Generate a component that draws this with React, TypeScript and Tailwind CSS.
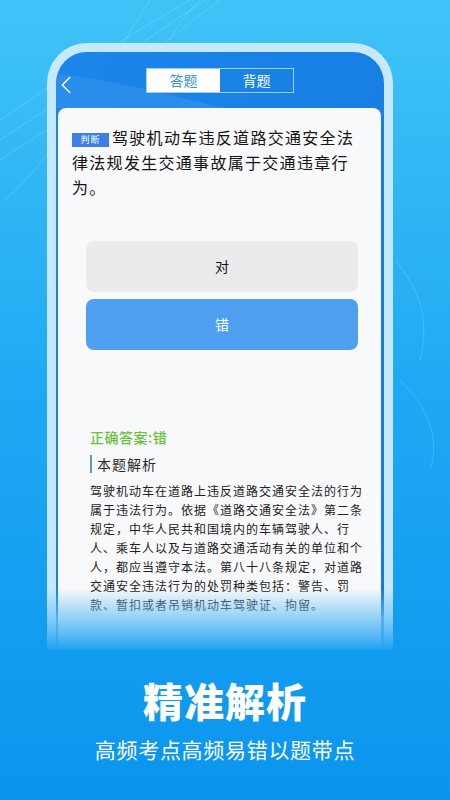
import { ChevronLeft } from 'lucide-react';

const cjk = { fontFamily: '"Noto Sans CJK SC", "Noto Sans", sans-serif' };

const analysis = [
  '驾驶机动车在道路上违反道路交通安全法的行为',
  '属于违法行为。依据《道路交通安全法》第二条',
  '规定，中华人民共和国境内的车辆驾驶人、行',
  '人、乘车人以及与道路交通活动有关的单位和个',
  '人，都应当遵守本法。第八十八条规定，对道路',
  '交通安全违法行为的处罚种类包括：警告、罚',
  '款、暂扣或者吊销机动车驾驶证、拘留。',
];

function Swirls() {
  // faint background waves
  return (
    <svg className="pointer-events-none absolute inset-0" width="450" height="800" viewBox="0 0 450 800" fill="none">
      <g stroke="#ffffff" strokeOpacity="0.16" strokeWidth="1">
        <path d="M0 120 C60 80 120 40 190 0" />
        <path d="M0 140 C70 95 130 50 205 0" />
        <path d="M0 160 C80 110 140 60 220 0" />
        <path d="M5 200 C60 150 100 80 150 0" />
        <path d="M170 40 C180 20 190 10 200 0" />
        <path d="M395 260 C420 290 430 320 420 360" />
        <path d="M400 380 C430 410 440 440 430 470" />
      </g>
    </svg>
  );
}

export default function App() {
  return (
    <div
      className="relative h-[800px] w-[450px] overflow-hidden bg-gradient-to-b from-[#3fc3f7] via-[#1ea8f3] to-[#0a95ee]"
      style={cjk}
    >
      <Swirls />

      <div className="relative flex flex-col pt-[43px]">
        {/* phone */}
        <div className="relative ml-[47px] h-[607px] w-[346px] overflow-hidden rounded-t-[40px] bg-[#c6eafb] px-[9px] pt-[9px]">
          <div className="flex h-full flex-col overflow-hidden rounded-t-[31px] bg-gradient-to-br from-[#1c86ea] to-[#1478e0]">
            {/* header */}
            <div className="relative flex h-[56px] shrink-0 justify-center pt-[16px]">
              <svg className="absolute left-0 top-0" width="328" height="56" viewBox="0 0 328 56" fill="none">
                <path d="M0 22 C60 28 120 45 170 56 L0 56 Z" fill="#3a98ee" fillOpacity="0.45" />
              </svg>
              <ChevronLeft className="absolute left-[-5px] top-[18px] h-[30px] w-[30px] text-white" strokeWidth={1.2} />
              <div className="relative flex h-[25px] w-[148px] border border-[#9fd0f7] text-[14px] leading-[23px]">
                <div className="flex-1 bg-white text-center text-[#3b90e6]">答题</div>
                <div className="flex-1 text-center text-white">背题</div>
              </div>
            </div>

            {/* card */}
            <div className="ml-[2px] mr-[3px] flex-1 rounded-t-[8px] bg-[#f8f9fa]">
              <p className="px-[14px] pt-[17px] text-[16px] leading-[25px] tracking-[1.3px] text-[#141414]">
                <span className="mr-[3px] inline-block h-[14px] w-[37px] bg-[#3d7fe6] text-center align-[1px] text-[9px] leading-[14px] tracking-[1px] text-white">
                  判断
                </span>
                驾驶机动车违反道路交通安全法
                <br />
                律法规发生交通事故属于交通违章行
                <br />
                为。
              </p>

              <div className="ml-[28px] mt-[41px] flex w-[272px] flex-col gap-[7px]">
                <div className="flex h-[51px] items-center justify-center rounded-[8px] bg-[#ebebeb] text-[14px] text-[#111]">
                  对
                </div>
                <div className="flex h-[51px] items-center justify-center rounded-[8px] bg-[#4f9ff0] text-[14px] text-white">
                  错
                </div>
              </div>

              <div className="px-[32px]">
                <div className="mt-[77px] text-[14px] font-medium leading-[20px] tracking-[0.5px] text-[#67c23a]">
                  正确答案:错
                </div>
                <div className="mt-[7px] flex items-center gap-[5px]">
                  <div className="h-[18px] w-[2px] bg-[#6b93b8]" />
                  <div className="text-[14px] leading-[20px] tracking-[1px] text-[#2a2a2a]">本题解析</div>
                </div>
                <p className="mt-[7px] whitespace-nowrap text-[12px] leading-[19px] tracking-[1px] text-[#222]">
                  {analysis.map((line) => (
                    <span key={line} className="block">
                      {line}
                    </span>
                  ))}
                </p>
              </div>
            </div>
          </div>

          {/* bottom fade into the background */}
          <div className="pointer-events-none absolute bottom-0 left-0 right-0 h-[62px] bg-gradient-to-b from-[#5ab8f5]/0 via-[#6cc2f6]/75 to-[#19a3f1]" />
        </div>

        <div className="mt-[30px] text-center text-[40px] font-black leading-[40px] tracking-[1px] text-white">
          精准解析
        </div>
        <div className="mt-[18px] text-center text-[21px] leading-[22px] tracking-[0.7px] text-white">
          高频考点高频易错以题带点
        </div>
      </div>
    </div>
  );
}
